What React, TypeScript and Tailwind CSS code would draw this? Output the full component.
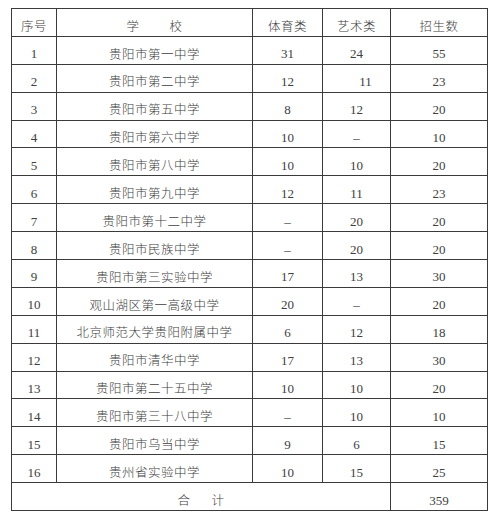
import { FC } from "react";

type Row = {
  no: number;
  school: string;
  sport: string;
  art: string;
  total: string;
  artShift?: boolean;
};

const rows: Row[] = [
  { no: 1, school: "贵阳市第一中学", sport: "31", art: "24", total: "55" },
  { no: 2, school: "贵阳市第二中学", sport: "12", art: "11", total: "23", artShift: true },
  { no: 3, school: "贵阳市第五中学", sport: "8", art: "12", total: "20" },
  { no: 4, school: "贵阳市第六中学", sport: "10", art: "–", total: "10" },
  { no: 5, school: "贵阳市第八中学", sport: "10", art: "10", total: "20" },
  { no: 6, school: "贵阳市第九中学", sport: "12", art: "11", total: "23" },
  { no: 7, school: "贵阳市第十二中学", sport: "–", art: "20", total: "20" },
  { no: 8, school: "贵阳市民族中学", sport: "–", art: "20", total: "20" },
  { no: 9, school: "贵阳市第三实验中学", sport: "17", art: "13", total: "30" },
  { no: 10, school: "观山湖区第一高级中学", sport: "20", art: "–", total: "20" },
  { no: 11, school: "北京师范大学贵阳附属中学", sport: "6", art: "12", total: "18" },
  { no: 12, school: "贵阳市清华中学", sport: "17", art: "13", total: "30" },
  { no: 13, school: "贵阳市第二十五中学", sport: "10", art: "10", total: "20" },
  { no: 14, school: "贵阳市第三十八中学", sport: "–", art: "10", total: "10" },
  { no: 15, school: "贵阳市乌当中学", sport: "9", art: "6", total: "15" },
  { no: 16, school: "贵州省实验中学", sport: "10", art: "15", total: "25" },
];

// shared cell look
const cell = "border border-[#3a3a3a] h-[27.9px] p-0 pt-[7px] text-center align-middle leading-none";
const num = "font-['Liberation_Serif',serif] text-[13px]";
const han = "font-['Noto_Sans_CJK_SC',sans-serif] text-[12.5px] font-light tracking-[0.5px]";

const App: FC = () => {
  return (
    <div className="w-[500px] h-[519px] bg-white pt-[8px] pl-[11px] text-[#404040]">
      <table className="table-fixed border-collapse w-[476px]">
        <colgroup>
          <col className="w-[45px]" />
          <col className="w-[196px]" />
          <col className="w-[70px]" />
          <col className="w-[68px]" />
          <col className="w-[97px]" />
        </colgroup>
        <thead>
          <tr>
            <th className={`${cell} ${han} font-light`}>序号</th>
            <th className={`${cell} ${han} font-light`}>
              学<span className="inline-block w-[30px]" />校
            </th>
            <th className={`${cell} ${han} font-light`}>体育类</th>
            <th className={`${cell} ${han} font-light`}>艺术类</th>
            <th className={`${cell} ${han} font-light`}>招生数</th>
          </tr>
        </thead>
        <tbody>
          {rows.map((r) => (
            <tr key={r.no}>
              <td className={`${cell} ${num}`}>{r.no}</td>
              <td className={`${cell} ${han}`}>{r.school}</td>
              <td className={`${cell} ${num}`}>{r.sport}</td>
              <td className={`${cell} ${num} ${r.artShift ? "pl-[18px]" : ""}`}>{r.art}</td>
              <td className={`${cell} ${num}`}>{r.total}</td>
            </tr>
          ))}
          <tr>
            <td colSpan={4} className={`${cell} ${han}`}>
              合<span className="inline-block w-[21px]" />计
            </td>
            <td className={`${cell} ${num}`}>359</td>
          </tr>
        </tbody>
      </table>
    </div>
  );
};

export default App;
